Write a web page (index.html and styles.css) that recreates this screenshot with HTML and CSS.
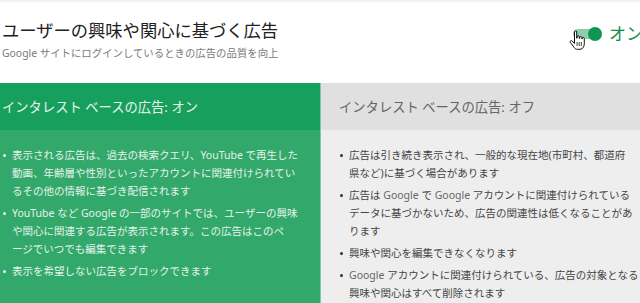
FILE: index.html
```html
<!DOCTYPE html>
<html lang="ja">
<head>
<meta charset="utf-8">
<link rel="stylesheet" href="styles.css">
</head>
<body>
<div class="page">
  <header class="top">
    <div class="titles">
      <h1 class="title">ユーザーの興味や関心に基づく広告</h1>
      <p class="subtitle"><span class="latin">Google</span> サイトにログインしているときの広告の品質を向上</p>
    </div>
    <div class="toggle">
      <span class="switch"><span class="knob"></span></span>
      <span class="toggle-label">オン</span>
      <svg class="cursor" width="17" height="21" viewBox="0 0 17 21" aria-hidden="true">
        <path d="M5.5 2c0-.7.5-1.2 1.1-1.2s1.1.5 1.1 1.2v6.2h.4V6.9c0-.7.5-1.1 1.1-1.1s1.1.4 1.1 1.1v1.6h.4V7.6c0-.7.5-1.1 1.1-1.1s1.1.4 1.1 1.1v1.3h.3V8.4c0-.6.5-1 1-1s1.1.4 1.1 1.1v5.2c0 3-1.700 5.600-4.300 5.600H8.3c-1.3 0-2.3-.6-3.1-1.7L1.4 12.4c-.4-.6-.3-1.2.2-1.6.5-.4 1.2-.3 1.6.2l2.3 2.5z" fill="#fff" stroke="#111" stroke-width="1" stroke-linejoin="round"/>
        <path d="M8.1 12v4M10.2 12v4M12.3 12v4" stroke="#111" stroke-width=".8"/>
      </svg>
    </div>
  </header>

  <section class="panels">
    <div class="panel on">
      <h2 class="panel-head">インタレスト ベースの広告: オン</h2>
      <ul class="points">
        <li>表示される広告は、過去の検索クエリ、<span class="latin">YouTube</span> で再生した<br>動画、年齢層や性別といったアカウントに関連付けられてい<br>るその他の情報に基づき配信されます</li>
        <li><span class="latin">YouTube</span> など <span class="latin">Google</span> の一部のサイトでは、ユーザーの興味<br>や関心に関連する広告が表示されます。この広告はこのペ<br>ージでいつでも編集できます</li>
        <li>表示を希望しない広告をブロックできます</li>
      </ul>
    </div>
    <div class="panel off">
      <h2 class="panel-head">インタレスト ベースの広告: オフ</h2>
      <ul class="points">
        <li>広告は引き続き表示され、一般的な現在地(市町村、都道府<br>県など)に基づく場合があります</li>
        <li>広告は <span class="latin">Google</span> で <span class="latin">Google</span> アカウントに関連付けられている<br>データに基づかないため、広告の関連性は低くなることがあ<br>ります</li>
        <li>興味や関心を編集できなくなります</li>
        <li><span class="latin">Google</span> アカウントに関連付けられている、広告の対象となる<br>興味や関心はすべて削除されます</li>
      </ul>
    </div>
  </section>
</div>
</body>
</html>
```

FILE: styles.css
```css
html, body {
  margin: 0;
  padding: 0;
  overflow: hidden;
  background: #fff;
}

body {
  width: 640px;
  height: 303px;
  border-top: 2px solid #f1f1f1;
  box-sizing: border-box;
  font-family: "Noto Sans", "Noto Sans CJK JP", sans-serif;
}

.page {
  width: 674px;
  height: 301px;
  margin-left: -16px;
  overflow: hidden;
}

.top {
  display: flex;
  justify-content: space-between;
  align-items: flex-start;
  padding: 0 15px 0 18px;
  height: 81px;
}

.titles {
  padding-top: 18px;
}

.title {
  margin: 0;
  font-weight: 400;
  font-size: 17.3px;
  line-height: 22px;
  color: #202020;
}

.subtitle {
  margin: 4px 0 0;
  font-size: 10.4px;
  line-height: 14px;
  color: #7a7a7a;
}

.toggle {
  position: relative;
  display: flex;
  align-items: center;
  padding-top: 21px;
}

.switch {
  position: relative;
  display: block;
  width: 27px;
  height: 10px;
  border-radius: 5px;
  background: #8bd0ac;
}

.knob {
  position: absolute;
  right: -2px;
  top: -2px;
  width: 14px;
  height: 14px;
  border-radius: 50%;
  background: #0f9654;
}

.toggle-label {
  margin-left: 9px;
  font-size: 17px;
  line-height: 22px;
  color: #0f8c4e;
}

.cursor {
  position: absolute;
  left: -4px;
  top: 28px;
}

.panels {
  display: grid;
  grid-template-columns: 337px 337px;
}

.panel-head {
  margin: 0;
  height: 47px;
  display: flex;
  align-items: center;
  padding: 0 18px;
  font-weight: 400;
  font-size: 13.3px;
}

.on .panel-head {
  background: #17a05d;
  color: #e6f4ec;
}

.off .panel-head {
  background: #e0e0e0;
  color: #666;
}

.panel.on {
  background: #33a86b;
}

.panel.off {
  background: #eeeeee;
  border-left: 1px solid #7fcaa3;
  margin-left: -1px;
}

.points {
  list-style: none;
  margin: 0;
  padding: 16px 0 20px 28px;
  font-size: 10.5px;
  line-height: 18px;
}

.points li {
  position: relative;
  margin-bottom: 4px;
  white-space: nowrap;
}

.points li::before {
  content: "";
  position: absolute;
  left: -9px;
  top: 8px;
  width: 3px;
  height: 3px;
  border-radius: 50%;
}

.on .points {
  color: #e4f3ea;
}

.on .points li::before {
  background: #e4f3ea;
}

.off .points {
  color: #444;
}

.off .points li::before {
  background: #333;
}

.off .latin {
  color: #666;
}
```
